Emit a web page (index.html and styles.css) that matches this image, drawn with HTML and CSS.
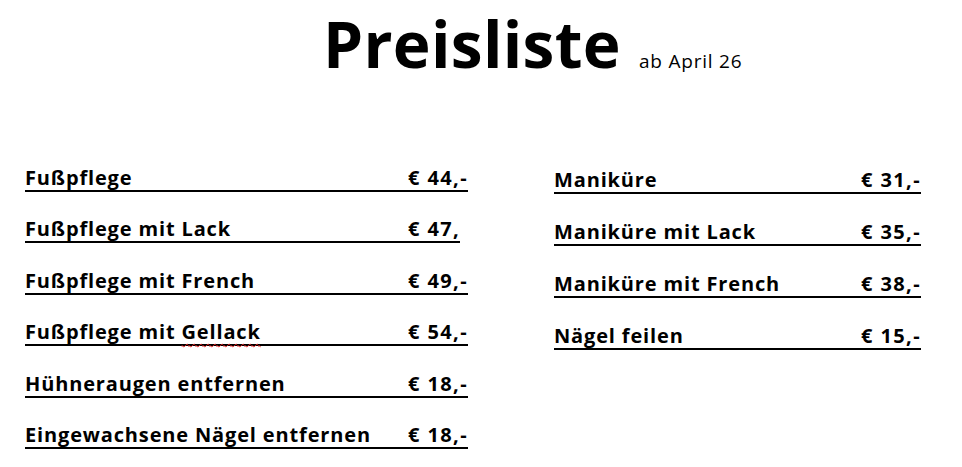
FILE: index.html
```html
<!DOCTYPE html>
<html lang="de">
<head>
<meta charset="utf-8">
<title>Preisliste</title>
<link rel="stylesheet" href="styles.css">
</head>
<body>
<div class="page">
  <header class="head">
    <h1 class="title">Preisliste</h1>
    <span class="sub">ab April 26</span>
  </header>
  <main class="cols">
    <section class="list list-left">
      <div class="row"><span class="label">Fußpflege</span><span class="price">€ 44,-</span></div>
      <div class="row"><span class="label">Fußpflege mit Lack</span><span class="price">€ 47,</span></div>
      <div class="row"><span class="label">Fußpflege mit French</span><span class="price">€ 49,-</span></div>
      <div class="row"><span class="label">Fußpflege mit <span class="spell">Gellack</span></span><span class="price">€ 54,-</span></div>
      <div class="row"><span class="label">Hühneraugen entfernen</span><span class="price">€ 18,-</span></div>
      <div class="row"><span class="label">Eingewachsene Nägel entfernen</span><span class="price">€ 18,-</span></div>
    </section>
    <section class="list list-right">
      <div class="row"><span class="label">Maniküre</span><span class="price">€ 31,-</span></div>
      <div class="row"><span class="label">Maniküre mit Lack</span><span class="price">€ 35,-</span></div>
      <div class="row"><span class="label">Maniküre mit French</span><span class="price">€ 38,-</span></div>
      <div class="row"><span class="label">Nägel feilen</span><span class="price">€ 15,-</span></div>
    </section>
  </main>
</div>
</body>
</html>
```
FILE: styles.css
```css
html, body {
  margin: 0;
  padding: 0;
  background: #fff;
}
body {
  font-family: "Open Sans", Lato, sans-serif;
  color: #000;
}
.page {
  width: 962px;
  height: 467px;
  overflow: hidden;
}
.head {
  display: flex;
  align-items: baseline;
  padding-left: 323px;
}
.title {
  margin: 0;
  font-size: 64px;
  font-weight: 700;
  line-height: normal;
  letter-spacing: 0.3px;
}
.sub {
  margin-left: 18px;
  font-size: 19px;
  font-weight: 400;
  letter-spacing: 0.8px;
}
.cols {
  display: grid;
  grid-template-columns: 529px auto;
  padding-left: 25px;
  margin-top: 79px;
}
.list {
  display: flex;
  flex-direction: column;
  gap: 25.4px;
}
.list-right {
  gap: 26px;
  padding-top: 2px;
}
.row {
  display: flex;
  width: fit-content;
  border-bottom: 2px solid #000;
  font-size: 20px;
  font-weight: 700;
  line-height: 24px;
}
.label, .price {
  flex: none;
  white-space: nowrap;
}
.label {
  letter-spacing: 0.85px;
}
.price {
  letter-spacing: 1.4px;
}
.list-left .label {
  width: 383px;
}
.list-right .label {
  width: 307px;
}
.spell {
  text-decoration: underline wavy #e02020;
  text-decoration-thickness: 1.2px;
  text-underline-offset: 4px;
}
```
